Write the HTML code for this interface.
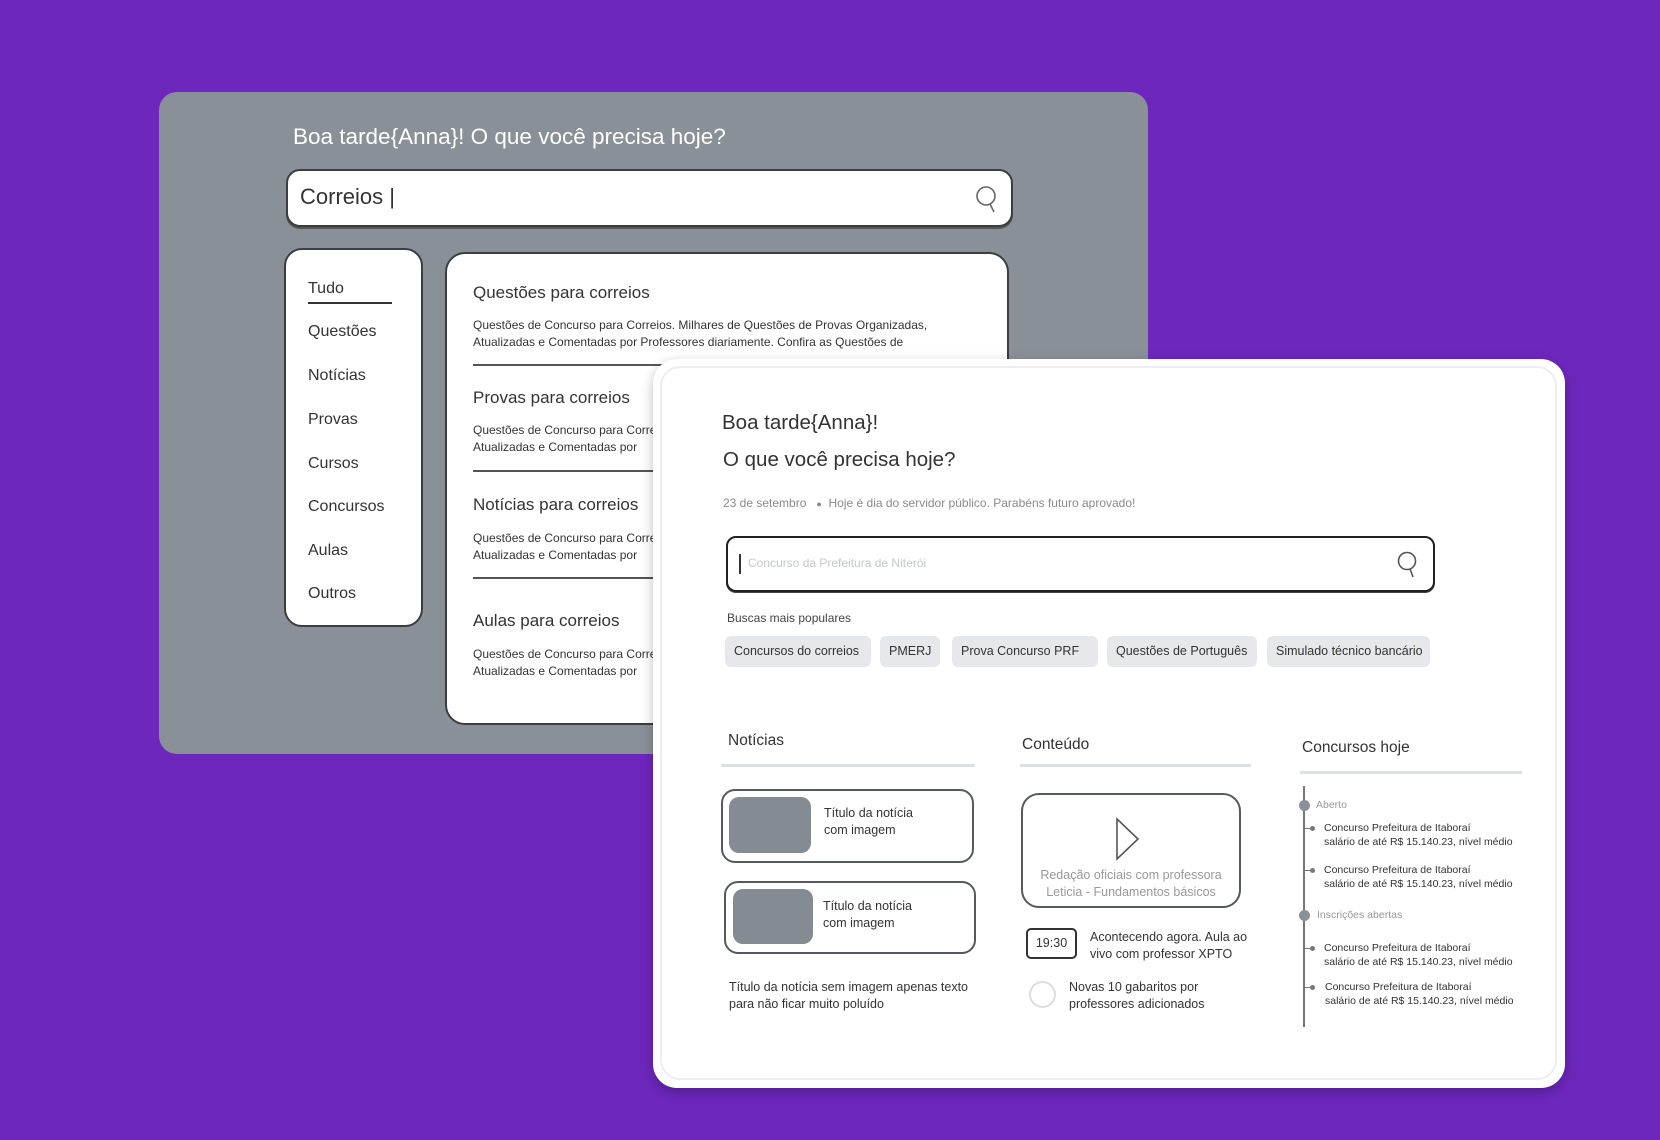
<!DOCTYPE html>
<html><head><meta charset="utf-8">
<style>
*{margin:0;padding:0;box-sizing:border-box}
body{width:1660px;height:1140px;background:#6d27bd;font-family:"Liberation Sans",sans-serif;position:relative;overflow:hidden;color:#333}
.a{position:absolute;white-space:nowrap}
.gray{left:159px;top:92px;width:989px;height:662px;background:#8a9097;border-radius:18px}
.menu{left:284px;top:248px;width:139px;height:379px;background:#fff;border:2px solid #3a3d42;border-radius:18px}
.res{left:445px;top:252px;width:564px;height:473px;background:#fff;border:2px solid #3a3d42;border-radius:20px;overflow:hidden}
.mi{font-size:16px;color:#333;left:308px}
.rh{font-size:17px;color:#333;left:26px}
.rd{font-size:12px;color:#333;left:26px;line-height:17px}
.sep{left:26px;width:520px;height:2px;background:#555}
.card{left:653px;top:359px;width:912px;height:729px;background:#fff;border-radius:24px;box-shadow:0 4px 12px rgba(0,0,0,.25)}
.inner{left:7px;top:7px;right:8px;bottom:8px;border:2px solid #eceef0;border-radius:20px}
.chip{top:277px;height:31px;background:#e6e8eb;border-radius:6px;font-size:12.5px;color:#333;line-height:31px;padding:0 9px}
.hd{font-size:15.5px;color:#333}
.ln{height:3px;background:#dcdfe3}
.nc{border:2px solid #555a60;border-radius:14px;background:#fff}
.img{background:#858b92;border-radius:10px}
.sm{font-size:12.5px;color:#333;line-height:17px}
.ti{font-size:10.5px;color:#333;line-height:14px}
.dot{width:11px;height:11px;border-radius:50%;background:#8a9097}
.lab{font-size:10.5px;color:#999}
.tick{width:8px;height:1px;background:#777}
.tick:after{content:"";position:absolute;right:-2px;top:-2px;width:5px;height:5px;border-radius:50%;background:#777}
</style></head><body>
<div class="a gray">
  <div class="a" style="left:134px;top:32px;font-size:22.5px;color:#fff">Boa tarde{Anna}! O que você precisa hoje?</div>
  <div class="a" style="left:127px;top:77px;width:727px;height:58px;background:#fff;border:2px solid #3a3d42;border-radius:14px;box-shadow:0 2px 0 #555">
    <div class="a" style="left:12px;top:13px;font-size:22px;color:#333">Correios |</div>
    <svg class="a" style="left:686px;top:14px" width="26" height="30" viewBox="0 0 26 30"><circle cx="12" cy="11" r="9" fill="none" stroke="#666" stroke-width="1.6"/><path d="M16 19 L20 27" stroke="#666" stroke-width="1.6"/></svg>
  </div>
</div>
<div class="a menu"></div>
<div class="a mi" style="top:280px">Tudo</div>
<div class="a" style="left:308px;top:302px;width:84px;height:2px;background:#333"></div>
<div class="a mi" style="top:323px">Questões</div>
<div class="a mi" style="top:367px">Notícias</div>
<div class="a mi" style="top:411px">Provas</div>
<div class="a mi" style="top:455px">Cursos</div>
<div class="a mi" style="top:498px">Concursos</div>
<div class="a mi" style="top:542px">Aulas</div>
<div class="a mi" style="top:585px">Outros</div>
<div class="a res">
  <div class="a rh" style="top:29px">Questões para correios</div>
  <div class="a rd" style="top:63px">Questões de Concurso para Correios. Milhares de Questões de Provas Organizadas,<br>Atualizadas e Comentadas por Professores diariamente. Confira as Questões de</div>
  <div class="a sep" style="top:110px"></div>
  <div class="a rh" style="top:134px">Provas para correios</div>
  <div class="a rd" style="top:168px">Questões de Concurso para Correios<br>Atualizadas e Comentadas por</div>
  <div class="a sep" style="top:216px"></div>
  <div class="a rh" style="top:241px">Notícias para correios</div>
  <div class="a rd" style="top:276px">Questões de Concurso para Correios<br>Atualizadas e Comentadas por</div>
  <div class="a sep" style="top:323px"></div>
  <div class="a rh" style="top:357px">Aulas para correios</div>
  <div class="a rd" style="top:392px">Questões de Concurso para Correios<br>Atualizadas e Comentadas por</div>
</div>
<div class="a card">
  <div class="a inner"></div>
  <div class="a" style="left:69px;top:52px;font-size:20.5px;color:#333">Boa tarde{Anna}!</div>
  <div class="a" style="left:70px;top:89px;font-size:20.5px;color:#333">O que você precisa hoje?</div>
  <div class="a" style="left:70px;top:137px;font-size:12px;color:#8a8a8a">23 de setembro &nbsp;&nbsp;<span style="font-size:9px">●</span>&nbsp; Hoje é dia do servidor público. Parabéns futuro aprovado!</div>
  <div class="a" style="left:73px;top:177px;width:709px;height:56px;border:2px solid #222;border-radius:10px;background:#fff;box-shadow:0 1px 0 #444">
    <div class="a" style="left:11px;top:16px;width:2px;height:20px;background:#333"></div>
    <div class="a" style="left:20px;top:18px;font-size:12px;color:#c4c8cc">Concurso da Prefeitura de Niterói</div>
    <svg class="a" style="left:668px;top:12px" width="24" height="30" viewBox="0 0 24 30"><circle cx="11" cy="11" r="8.5" fill="none" stroke="#555" stroke-width="1.6"/><path d="M14 19 L17 27" stroke="#555" stroke-width="1.6"/></svg>
  </div>
  <div class="a" style="left:74px;top:252px;font-size:12px;color:#444">Buscas mais populares</div>
  <div class="a chip" style="left:72px;width:146px">Concursos do correios</div>
  <div class="a chip" style="left:227px;width:60px">PMERJ</div>
  <div class="a chip" style="left:299px;width:146px">Prova Concurso PRF</div>
  <div class="a chip" style="left:454px;width:150px">Questões de Português</div>
  <div class="a chip" style="left:614px;width:163px">Simulado técnico bancário</div>

  <div class="a hd" style="left:75px;top:373px">Notícias</div>
  <div class="a ln" style="left:68px;top:405px;width:254px"></div>
  <div class="a hd" style="left:369px;top:377px">Conteúdo</div>
  <div class="a ln" style="left:367px;top:405px;width:231px"></div>
  <div class="a hd" style="left:649px;top:380px">Concursos hoje</div>
  <div class="a ln" style="left:647px;top:412px;width:222px"></div>

  <div class="a nc" style="left:68px;top:430px;width:253px;height:74px"></div>
  <div class="a img" style="left:76px;top:438px;width:82px;height:56px"></div>
  <div class="a sm" style="left:171px;top:446px">Título da notícia<br>com imagem</div>
  <div class="a nc" style="left:71px;top:522px;width:252px;height:73px"></div>
  <div class="a img" style="left:80px;top:530px;width:80px;height:55px"></div>
  <div class="a sm" style="left:170px;top:539px">Título da notícia<br>com imagem</div>
  <div class="a sm" style="left:76px;top:620px">Título da notícia sem imagem apenas texto<br>para não ficar muito poluído</div>

  <div class="a nc" style="left:368px;top:434px;width:220px;height:115px;border-radius:18px"></div>
  <svg class="a" style="left:462px;top:458px" width="26" height="44" viewBox="0 0 26 44"><path d="M2 2 L2 42 L23 22 Z" fill="none" stroke="#555" stroke-width="1.6"/></svg>
  <div class="a" style="left:368px;top:508px;width:220px;text-align:center;font-size:12.5px;color:#999;line-height:17px">Redação oficiais com professora<br>Leticia - Fundamentos básicos</div>
  <div class="a" style="left:373px;top:569px;width:51px;height:31px;border:2px solid #333;border-radius:5px;font-size:12.5px;line-height:27px;text-align:center;color:#333">19:30</div>
  <div class="a sm" style="left:437px;top:570px">Acontecendo agora. Aula ao<br>vivo com professor XPTO</div>
  <div class="a" style="left:376px;top:622px;width:27px;height:27px;border:2px solid #ddd;border-radius:50%"></div>
  <div class="a sm" style="left:416px;top:620px">Novas 10 gabaritos por<br>professores adicionados</div>

  <div class="a" style="left:650px;top:427px;width:2px;height:241px;background:#777"></div>
  <div class="a dot" style="left:646px;top:441px"></div>
  <div class="a lab" style="left:663px;top:440px">Aberto</div>
  <div class="a dot" style="left:646px;top:551px"></div>
  <div class="a lab" style="left:664px;top:550px">Inscrições abertas</div>
  <div class="a tick" style="left:652px;top:469px"></div>
  <div class="a ti" style="left:671px;top:462px">Concurso Prefeitura de Itaboraí<br>salário de até R$ 15.140.23, nível médio</div>
  <div class="a tick" style="left:652px;top:511px"></div>
  <div class="a ti" style="left:671px;top:504px">Concurso Prefeitura de Itaboraí<br>salário de até R$ 15.140.23, nível médio</div>
  <div class="a tick" style="left:652px;top:589px"></div>
  <div class="a ti" style="left:671px;top:582px">Concurso Prefeitura de Itaboraí<br>salário de até R$ 15.140.23, nível médio</div>
  <div class="a tick" style="left:652px;top:628px"></div>
  <div class="a ti" style="left:672px;top:621px">Concurso Prefeitura de Itaboraí<br>salário de até R$ 15.140.23, nível médio</div>
</div>
</body></html>
